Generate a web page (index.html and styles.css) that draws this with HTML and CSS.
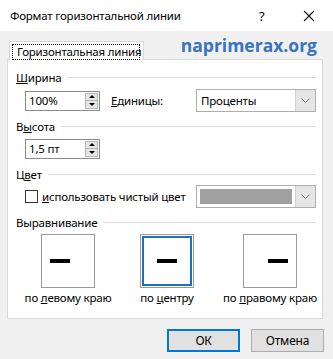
FILE: index.html
```html
<!DOCTYPE html>
<html>
<head>
    <title>Формат горизонтальной линии</title>
    <link rel="stylesheet" href="styles.css">
</head>
<body>
<div class="window">
    <div class="titlebar">
        <span class="title">Формат горизонтальной линии</span>
        <span class="help">?</span>
        <span class="close">
            <svg width="12" height="12" viewBox="0 0 12 12"><path d="M1 1L11 11M11 1L1 11" stroke="#111" stroke-width="1.1" fill="none"/></svg>
        </span>
    </div>

    <div class="tabs">
        <div class="tab"><span class="focus">Горизонтальная линия</span></div>
        <div class="watermark">naprimerax.org</div>
    </div>

    <div class="panel">
        <div class="group-title"><span><u>Ш</u>ирина</span></div>
        <div class="row row-width">
            <div class="spin">
                <span class="spin-value">100%</span>
                <span class="spin-btns"><i class="up"></i><i class="down"></i></span>
            </div>
            <span class="units-label"><u>Е</u>диницы:</span>
            <div class="combo">
                <span class="combo-value">Проценты</span>
                <span class="combo-arrow"><svg width="9" height="6" viewBox="0 0 9 6"><path d="M0.5 0.5L4.5 4.5L8.5 0.5" stroke="#777" fill="none"/></svg></span>
            </div>
        </div>

        <div class="group-title"><span>В<u>ы</u>сота</span></div>
        <div class="row row-height">
            <div class="spin">
                <span class="spin-value">1,5 пт</span>
                <span class="spin-btns"><i class="up"></i><i class="down"></i></span>
            </div>
        </div>

        <div class="group-title"><span>Ц<u>в</u>ет</span></div>
        <div class="row row-color">
            <span class="checkbox"></span>
            <span class="check-label"><u>и</u>спользовать чистый цвет</span>
            <div class="combo">
                <span class="combo-swatch"></span>
                <span class="combo-arrow"><svg width="9" height="6" viewBox="0 0 9 6"><path d="M0.5 0.5L4.5 4.5L8.5 0.5" stroke="#777" fill="none"/></svg></span>
            </div>
        </div>

        <div class="group-title"><span>Выравнивание</span></div>
        <div class="align-grid">
            <div class="align-item">
                <div class="align-box left"><span class="dash"></span></div>
                <span class="align-label">по <u>л</u>евому краю</span>
            </div>
            <div class="align-item">
                <div class="align-box center selected"><span class="dash"></span></div>
                <span class="align-label">по <u>ц</u>ентру</span>
            </div>
            <div class="align-item">
                <div class="align-box right"><span class="dash"></span></div>
                <span class="align-label">по <u>п</u>равому краю</span>
            </div>
        </div>
    </div>

    <div class="buttons">
        <button class="btn default">ОК</button>
        <button class="btn">Отмена</button>
    </div>
</div>
</body>
</html>
```

FILE: styles.css
```css
body {
    margin: 0;
    font-family: "Noto Sans", "Open Sans", sans-serif;
    font-size: 11.5px;
    letter-spacing: -0.2px;
    color: #000;
    white-space: nowrap;
}
.window {
    width: 333px;
    height: 359px;
    background: #f0f0f0;
    overflow: hidden;
}
.titlebar {
    height: 31px;
    background: #fff;
    display: flex;
    align-items: center;
    padding-left: 10px;
}
.title { flex: 1; }
.help {
    width: 14px;
    margin-right: 30px;
    font-size: 13px;
}
.close {
    display: flex;
    margin-right: 18px;
}

.tabs {
    height: 28px;
    display: flex;
    align-items: flex-end;
    padding: 0 16px 0 9px;
}
.tab {
    position: relative;
    z-index: 1;
    height: 19px;
    width: 135px;
    box-sizing: border-box;
    background: #fff;
    border: 1px solid #d9d9d9;
    border-bottom: none;
    margin-bottom: -1px;
    padding: 2px 0 0 2px;
}
.focus {
    display: block;
    height: 14px;
    line-height: 13px;
    padding-left: 4px;
    border: 1px dotted #000;
    width: 122px;
}
.watermark {
    margin-left: auto;
    align-self: flex-start;
    margin-top: 2px;
    font-family: "Open Sans", sans-serif;
    font-weight: 700;
    font-size: 17.5px;
    letter-spacing: 0;
    color: #3a73bd;
}

.panel {
    margin: 0 10px 0 7px;
    height: 260px;
    box-sizing: border-box;
    background: #fff;
    border: 1px solid #d9d9d9;
    padding: 9px 6px 0 8px;
}
.group-title {
    display: flex;
    align-items: center;
    gap: 6px;
    height: 16px;
}
.group-title::after {
    content: '';
    flex: 1;
    border-top: 1px solid #dcdcdc;
}
.row {
    display: flex;
    align-items: center;
    height: 23px;
    padding-left: 9px;
}
.row-width { margin: 4px 0 6px; }
.row-height { margin: 3px 0 6px; }
.row-color { margin: 3px 0 6px; }

.spin {
    width: 75px;
    height: 20px;
    box-sizing: border-box;
    border: 1px solid #8a8a8a;
    display: flex;
}
.spin-value {
    flex: 1;
    padding-left: 3px;
    line-height: 18px;
}
.spin-btns {
    width: 13px;
    display: flex;
    flex-direction: column;
    padding: 1px 1px 1px 0;
}
.spin-btns i {
    flex: 1;
    background: #e6e6e6;
    border: 1px solid #b5b5b5;
    display: flex;
    align-items: center;
    justify-content: center;
}
.spin-btns i + i { border-top: none; }
.spin-btns .up::before {
    content: '';
    border-left: 3px solid transparent;
    border-right: 3px solid transparent;
    border-bottom: 3px solid #000;
}
.spin-btns .down::before {
    content: '';
    border-left: 3px solid transparent;
    border-right: 3px solid transparent;
    border-top: 3px solid #000;
}

.units-label {
    margin-left: 11px;
}
.combo {
    width: 120px;
    height: 23px;
    box-sizing: border-box;
    border: 1px solid #adadad;
    display: flex;
    margin-left: auto;
}
.combo-value {
    flex: 1;
    padding-left: 4px;
    line-height: 21px;
}
.combo-swatch {
    flex: 1;
    margin: 3px;
    background: #a0a0a0;
}
.combo-arrow {
    width: 19px;
    background: #e5e5e5;
    border-left: 1px solid #d0d0d0;
    display: flex;
    align-items: center;
    justify-content: center;
}

.checkbox {
    width: 13px;
    height: 13px;
    box-sizing: border-box;
    border: 1px solid #333;
}
.check-label { margin-left: 4px; }

.align-grid {
    display: grid;
    grid-template-columns: 98px 100px 106px;
    margin: 4px 0 0 3px;
}
.align-item {
    display: flex;
    flex-direction: column;
    align-items: center;
}
.align-box {
    width: 54px;
    height: 54px;
    box-sizing: border-box;
    border: 1px solid #9a9a9a;
    display: flex;
    align-items: center;
}
.align-box.left { padding-left: 8px; }
.align-box.center { justify-content: center; }
.align-box.right { justify-content: flex-end; padding-right: 8px; }
.align-box.selected {
    box-shadow: inset 0 0 0 1px #fff, inset 0 0 0 3px #1e6fbf;
}
.dash {
    width: 20px;
    height: 4px;
    background: #000;
}
.align-label {
    margin-top: 2px;
    line-height: 16px;
}

.buttons {
    display: flex;
    justify-content: flex-end;
    gap: 11px;
    padding-right: 9px;
    margin-top: 10px;
}
.btn {
    width: 73px;
    height: 23px;
    font-family: inherit;
    font-size: 12px;
    letter-spacing: -0.2px;
    background: #e1e1e1;
    border: 1px solid #adadad;
    padding: 0;
}
.btn.default {
    border: 2px solid #0078d7;
}
```
